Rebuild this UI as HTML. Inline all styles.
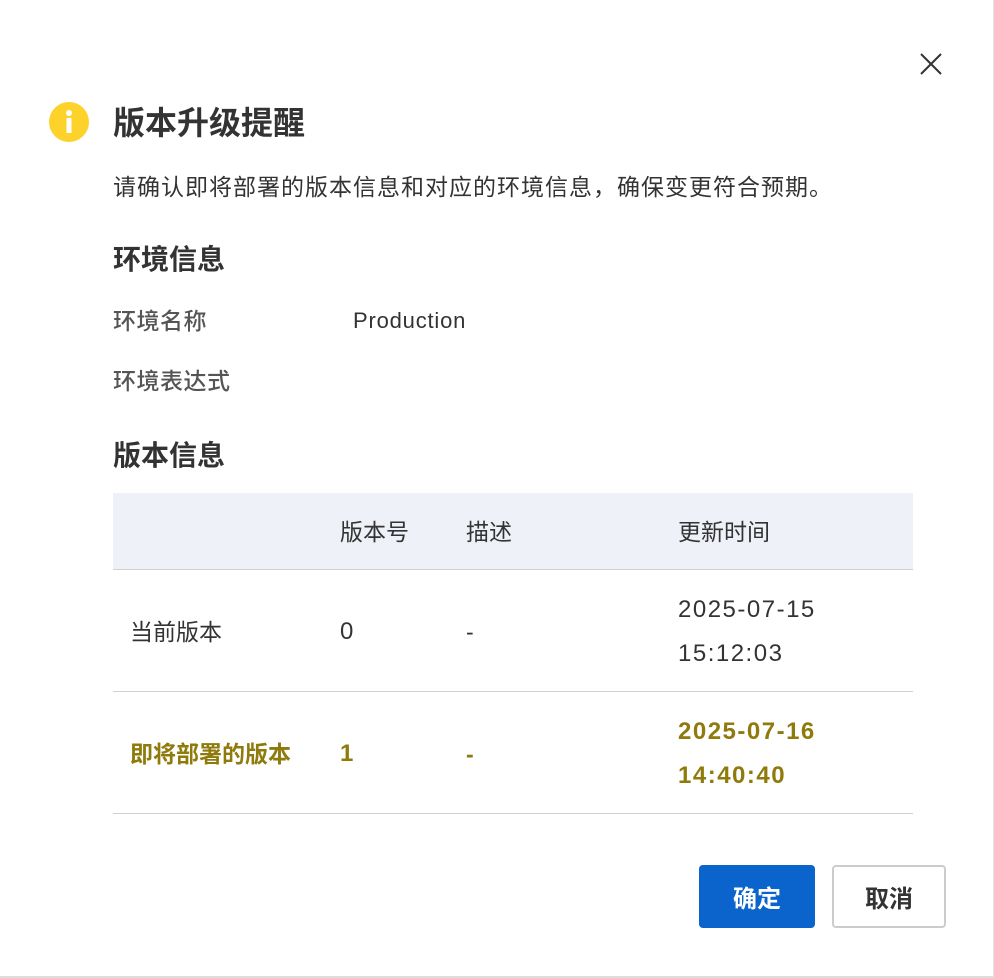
<!DOCTYPE html>
<html><head><meta charset="utf-8"><style>
*{margin:0;padding:0;box-sizing:border-box}
body{width:994px;height:978px;background:#fff;font-family:"Liberation Sans","Noto Sans CJK SC",sans-serif;color:#333;position:relative;overflow:hidden;border-bottom:2px solid #ddd;border-right:1px solid #e5e5e5}
.a{position:absolute;white-space:nowrap}
.t{font-size:32px;font-weight:bold;color:#333;line-height:40px}
.h{font-size:28px;font-weight:bold;color:#333;line-height:36px}
.d{font-size:23px;color:#333;line-height:30px;letter-spacing:1px}
.l{font-size:23px;color:#555;font-weight:500;line-height:30px;letter-spacing:0.5px}
.p{font-size:22px;letter-spacing:0.8px;line-height:30px}
.tbl{position:absolute;left:113px;width:800px;top:493px}
.hd{height:77px;background:#eef1f8;border-bottom:1px solid #d0d0d0;position:relative}
.row{height:122px;border-bottom:1px solid #d0d0d0;position:relative}
.c{position:absolute;font-size:23px;line-height:42px}
.n{letter-spacing:1.5px;font-size:24px}
.y{color:#8f7a0c;font-weight:bold}
.btn{position:absolute;top:865px;height:63px;border-radius:4px;font-size:24px;font-weight:bold;display:flex;align-items:center;justify-content:center}
</style></head><body>
<svg class="a" style="left:919px;top:52px" width="24" height="24" viewBox="0 0 24 24"><path d="M2 2L22 22M22 2L2 22" stroke="#333" stroke-width="2"/></svg>
<svg class="a" style="left:49px;top:102px" width="40" height="40" viewBox="0 0 40 40"><circle cx="20" cy="20" r="20" fill="#fcd22b"/><circle cx="20" cy="11" r="3" fill="#fff"/><rect x="17.5" y="16" width="5" height="15" fill="#fff"/></svg>
<div class="a t" style="left:113px;top:103px">版本升级提醒</div>
<div class="a d" style="left:113px;top:172px">请确认即将部署的版本信息和对应的环境信息，确保变更符合预期。</div>
<div class="a h" style="left:113px;top:242px">环境信息</div>
<div class="a l" style="left:113px;top:306px">环境名称</div>
<div class="a p" style="left:353px;top:306px">Production</div>
<div class="a l" style="left:113px;top:366px">环境表达式</div>
<div class="a h" style="left:113px;top:438px">版本信息</div>
<div class="tbl">
<div class="hd"><div class="c" style="left:227px;top:18px">版本号</div><div class="c" style="left:353px;top:18px">描述</div><div class="c" style="left:565px;top:18px">更新时间</div></div>
<div class="row"><div class="c" style="left:17px;top:41px">当前版本</div><div class="c n" style="left:227px;top:41px">0</div><div class="c" style="left:353px;top:41px">-</div><div class="c n" style="left:565px;top:18px;line-height:44px">2025-07-15<br>15:12:03</div></div>
<div class="row"><div class="c y" style="left:17px;top:41px">即将部署的版本</div><div class="c y n" style="left:227px;top:41px">1</div><div class="c y" style="left:353px;top:41px">-</div><div class="c y n" style="left:565px;top:18px;line-height:44px">2025-07-16<br>14:40:40</div></div>
</div>
<div class="btn" style="left:699px;width:116px;background:#0b64cc;color:#fff">确定</div>
<div class="btn" style="left:832px;width:114px;border:2px solid #ccc;color:#333">取消</div>
</body></html>
